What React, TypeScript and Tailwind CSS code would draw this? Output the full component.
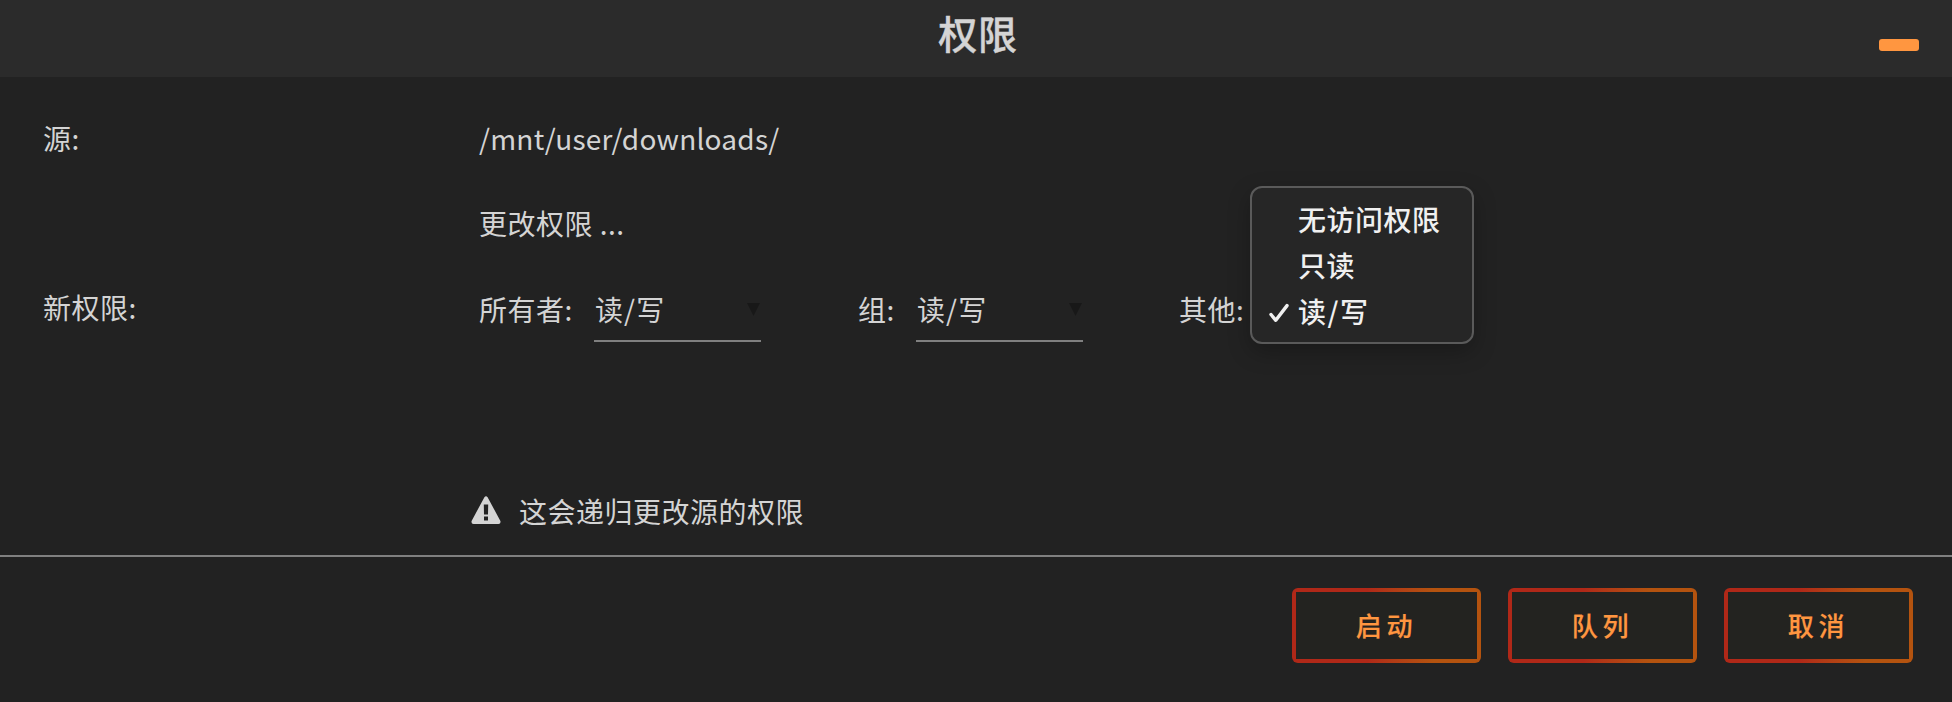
import type { ReactNode } from "react";

function Row({ label, className, children }: { label?: string; className: string; children: ReactNode }) {
  return (
    <div className={`flex items-start ${className}`}>
      <div className="w-[436px] shrink-0">{label}</div>
      {children}
    </div>
  );
}

function Select({ value }: { value: string }) {
  return (
    <div className="flex h-[53px] w-[167px] items-start justify-between border-b-2 border-[#808080] pl-px">
      <span className="tracking-[1.1px]">{value}</span>
      <svg className="mt-[14px] mr-px h-[13px] w-[13px]" viewBox="0 0 13 13">
        <path d="M0 0H13L6.5 13Z" fill="#181818" />
      </svg>
    </div>
  );
}

function Option({ text, selected }: { text: string; selected?: boolean }) {
  return (
    <div className="flex h-[46px] items-center">
      <span className="flex w-[31px] shrink-0 pl-[2px]">
        {selected && (
          <svg className="mt-1 h-[20px] w-[20px]" viewBox="0 0 20 20" fill="none" stroke="#f0f0f0" strokeWidth="3.4" strokeLinecap="round" strokeLinejoin="round">
            <path d="M2 11.5L6.8 17.3L18 2.6" />
          </svg>
        )}
      </span>
      <span className={selected ? "tracking-[1.6px]" : ""}>{text}</span>
    </div>
  );
}

function ActionButton({ text }: { text: string }) {
  return (
    <button className="h-[75px] w-[189px] rounded-[6px] bg-linear-to-r from-[#b02818] from-40% to-[#b4530f] to-75% p-1">
      <span className="flex h-full w-full items-center justify-center bg-[#232320] pb-px text-[26px] font-medium tracking-[4.8px] text-[#ff9640] [-webkit-text-stroke:0.2px_#ff9640]">
        {text}
      </span>
    </button>
  );
}

export default function App() {
  return (
    <div className="flex h-[702px] w-[1952px] flex-col overflow-hidden bg-[#222222] font-['Noto_Sans_CJK_SC',sans-serif] text-[28px] leading-[40px] tracking-[0.5px] text-[#d4d4d4]">
      <header className="grid h-[77px] grid-cols-[1fr_auto_1fr] bg-[#2b2b2b]">
        <span />
        <h1 className="pt-[3px] pl-[4px] text-[39px] leading-[58px] font-medium tracking-[0.8px] [-webkit-text-stroke:0.4px_#d4d4d4]">权限</h1>
        <button className="mt-[39px] mr-[33px] h-[12px] w-[40px] justify-self-end rounded-[3px] bg-[#ff9640]" />
      </header>
      <main className="flex h-[478px] flex-col pl-[43px]">
        <Row label="源:" className="mt-[41px] h-[85px]">
          <span className="tracking-[0.22px]">/mnt/user/downloads/</span>
        </Row>
        <Row className="h-[84px]">
          <span>更改权限 ...</span>
        </Row>
        <Row label="新权限:" className="h-[204px]">
          <div className="flex w-[379px] shrink-0 pt-0.5">
            <span className="w-[115px]">所有者:</span>
            <Select value="读/写" />
          </div>
          <div className="flex w-[321px] shrink-0 pt-0.5">
            <span className="w-[58px]">组:</span>
            <Select value="读/写" />
          </div>
          <div className="relative pt-0.5">
            <span>其他:</span>
            <div className="absolute -top-[101px] left-[71px] w-[224px] rounded-[12px] border-2 border-[#5a5a5a] bg-[#262626] py-[8px] pl-[15px] font-medium whitespace-nowrap text-[#f0f0f0] shadow-[0_8px_22px_rgba(0,0,0,0.25)]">
              <Option text="无访问权限" />
              <Option text="只读" />
              <Option text="读/写" selected />
            </div>
          </div>
        </Row>
        <div className="flex items-start pl-[428px]">
          <svg className="mt-[5px] mr-[18px] h-[28px] w-[30px]" viewBox="0 0 30 28">
            <path fillRule="evenodd" d="M13.4 1.2Q15 -0.6 16.6 1.2L29.4 25Q30 28 27.5 28H2.5Q0 28 0.6 25ZM12.8 8.5L13 18.5H17L17.2 8.5ZM13 20.5V24.5H17V20.5Z" fill="#d4d4d4" />
          </svg>
          <span>这会递归更改源的权限</span>
        </div>
      </main>
      <footer className="flex h-[147px] justify-end gap-[27px] border-t-2 border-[#808080] pt-[31px] pr-[39px]">
        <ActionButton text="启动" />
        <ActionButton text="队列" />
        <ActionButton text="取消" />
      </footer>
    </div>
  );
}
